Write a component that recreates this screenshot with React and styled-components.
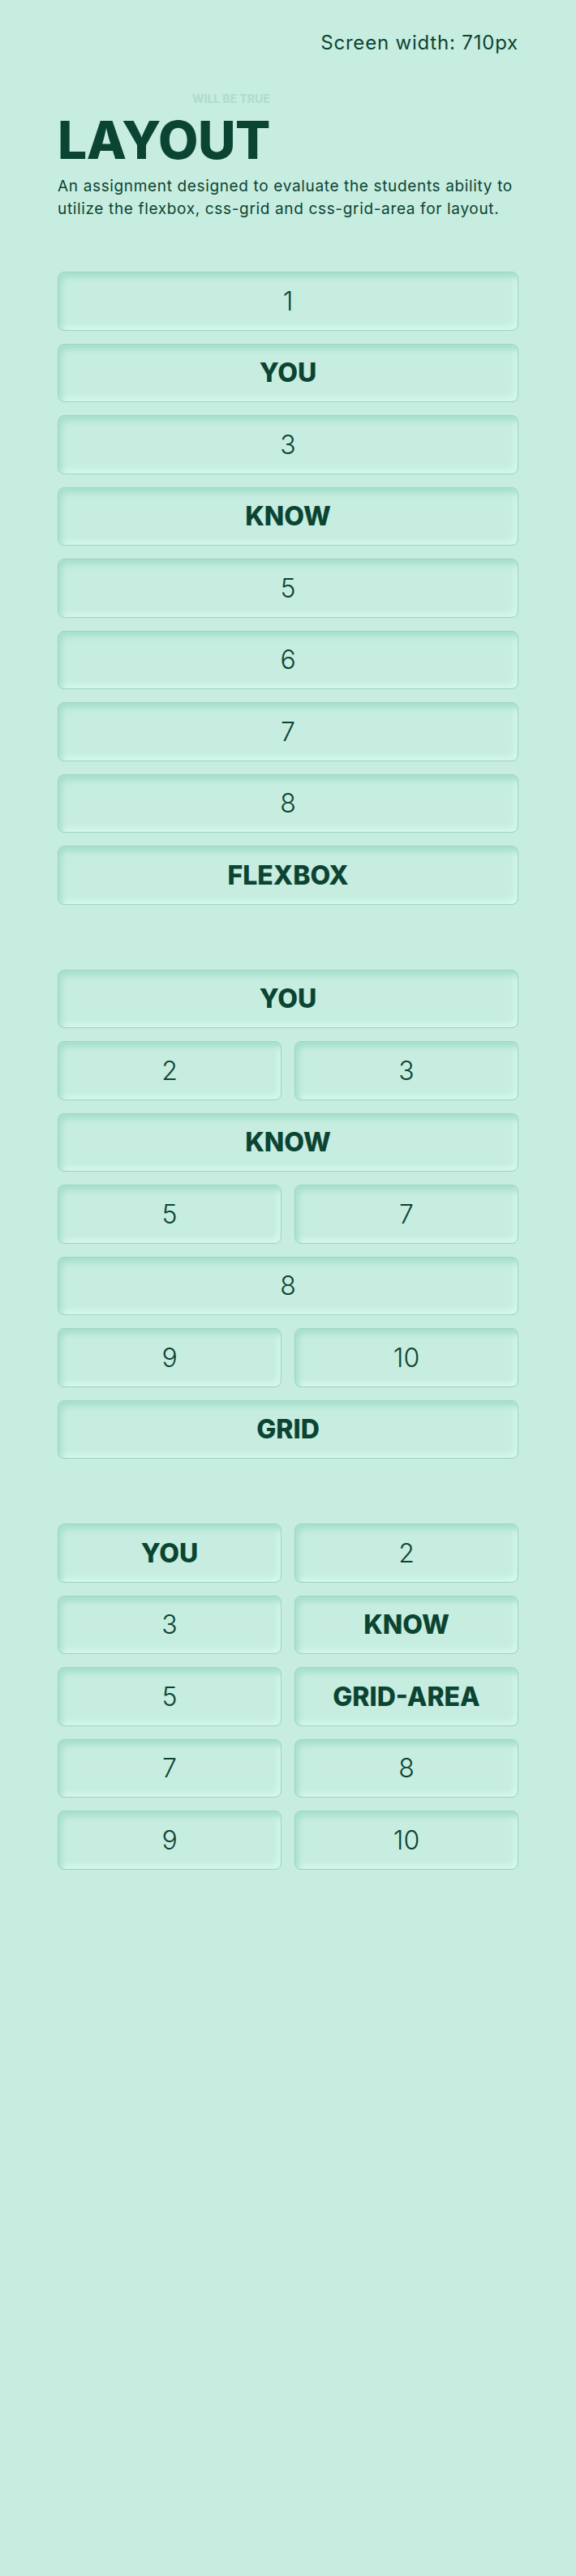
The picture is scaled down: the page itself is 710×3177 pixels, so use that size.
import styled, { createGlobalStyle } from "styled-components";

const flexItems = ["1", "YOU", "3", "KNOW", "5", "6", "7", "8", "FLEXBOX"];

// wide = spans both columns
const gridItems = [
  { label: "YOU", wide: true },
  { label: "2" },
  { label: "3" },
  { label: "KNOW", wide: true },
  { label: "5" },
  { label: "7" },
  { label: "8", wide: true },
  { label: "9" },
  { label: "10" },
  { label: "GRID", wide: true },
];

const areaItems = ["YOU", "2", "3", "KNOW", "5", "GRID-AREA", "7", "8", "9", "10"];

const isWord = (label) => /[A-Z]/.test(label);

export default function App() {
  return (
    <>
      <GlobalStyle />
      <Page>
        <ScreenWidth>Screen width: 710px</ScreenWidth>

        <Header>
          <TitleBlock>
            <Tagline>WILL BE TRUE</Tagline>
            <Title>LAYOUT</Title>
          </TitleBlock>
          <Intro>
            An assignment designed to evaluate the students ability to utilize
            the flexbox, css-grid and css-grid-area for layout.
          </Intro>
        </Header>

        <FlexSection>
          {flexItems.map((label) => (
            <Box key={label} $word={isWord(label)}>
              {label}
            </Box>
          ))}
        </FlexSection>

        <GridSection>
          {gridItems.map(({ label, wide }) => (
            <Box key={label} $word={isWord(label)} $wide={wide}>
              {label}
            </Box>
          ))}
        </GridSection>

        <GridSection>
          {areaItems.map((label) => (
            <Box key={label} $word={isWord(label)}>
              {label}
            </Box>
          ))}
        </GridSection>
      </Page>
    </>
  );
}

const GlobalStyle = createGlobalStyle`
  html, body {
    margin: 0;
    background: #c6ede0;
  }

  body {
    min-height: 3177px;
    font-family: Inter, "Liberation Sans", sans-serif;
    color: #0c4433;
  }
`;

const Page = styled.main`
  width: 80%;
  margin: 0 auto;
  padding-top: 35px;
  display: flex;
  flex-direction: column;
`;

const ScreenWidth = styled.p`
  margin: 0;
  text-align: right;
  font-size: 24px;
  line-height: 36px;
  font-weight: 400;
  letter-spacing: 0.8px;
`;

const Header = styled.header`
  margin-top: 41px;
  display: flex;
  flex-direction: column;
  gap: 11px;
`;

const TitleBlock = styled.div`
  align-self: flex-start;
  display: flex;
  flex-direction: column;
  align-items: flex-end;
  gap: 9px;
`;

const Tagline = styled.span`
  font-size: 14px;
  line-height: 20px;
  font-weight: 800;
  color: #b3dccd;
`;

const Title = styled.h1`
  margin: 0;
  font-size: 64px;
  line-height: 64px;
  font-weight: 800;
  letter-spacing: -0.5px;
`;

const Intro = styled.p`
  margin: 0;
  font-size: 19px;
  line-height: 28px;
  font-weight: 400;
  letter-spacing: 0.65px;
`;

const FlexSection = styled.section`
  margin-top: 63px;
  display: flex;
  flex-direction: column;
  gap: 16px;
`;

const GridSection = styled.section`
  margin-top: 80px;
  display: grid;
  grid-template-columns: 1fr 1fr;
  gap: 16px;
`;

const Box = styled.div`
  grid-column: ${({ $wide }) => ($wide ? "1 / -1" : "auto")};
  box-sizing: border-box;
  height: 72.5px;
  display: flex;
  align-items: center;
  justify-content: center;
  border: 1px solid #9fd3c2;
  border-radius: 8px;
  background: #c6ede0;
  box-shadow: inset 4px 6px 7px #a6e0cc, inset -4px -5px 6px #d5f7ec;
  font-size: 32px;
  font-weight: ${({ $word }) => ($word ? 800 : 300)};
  color: #0c4433;
`;
